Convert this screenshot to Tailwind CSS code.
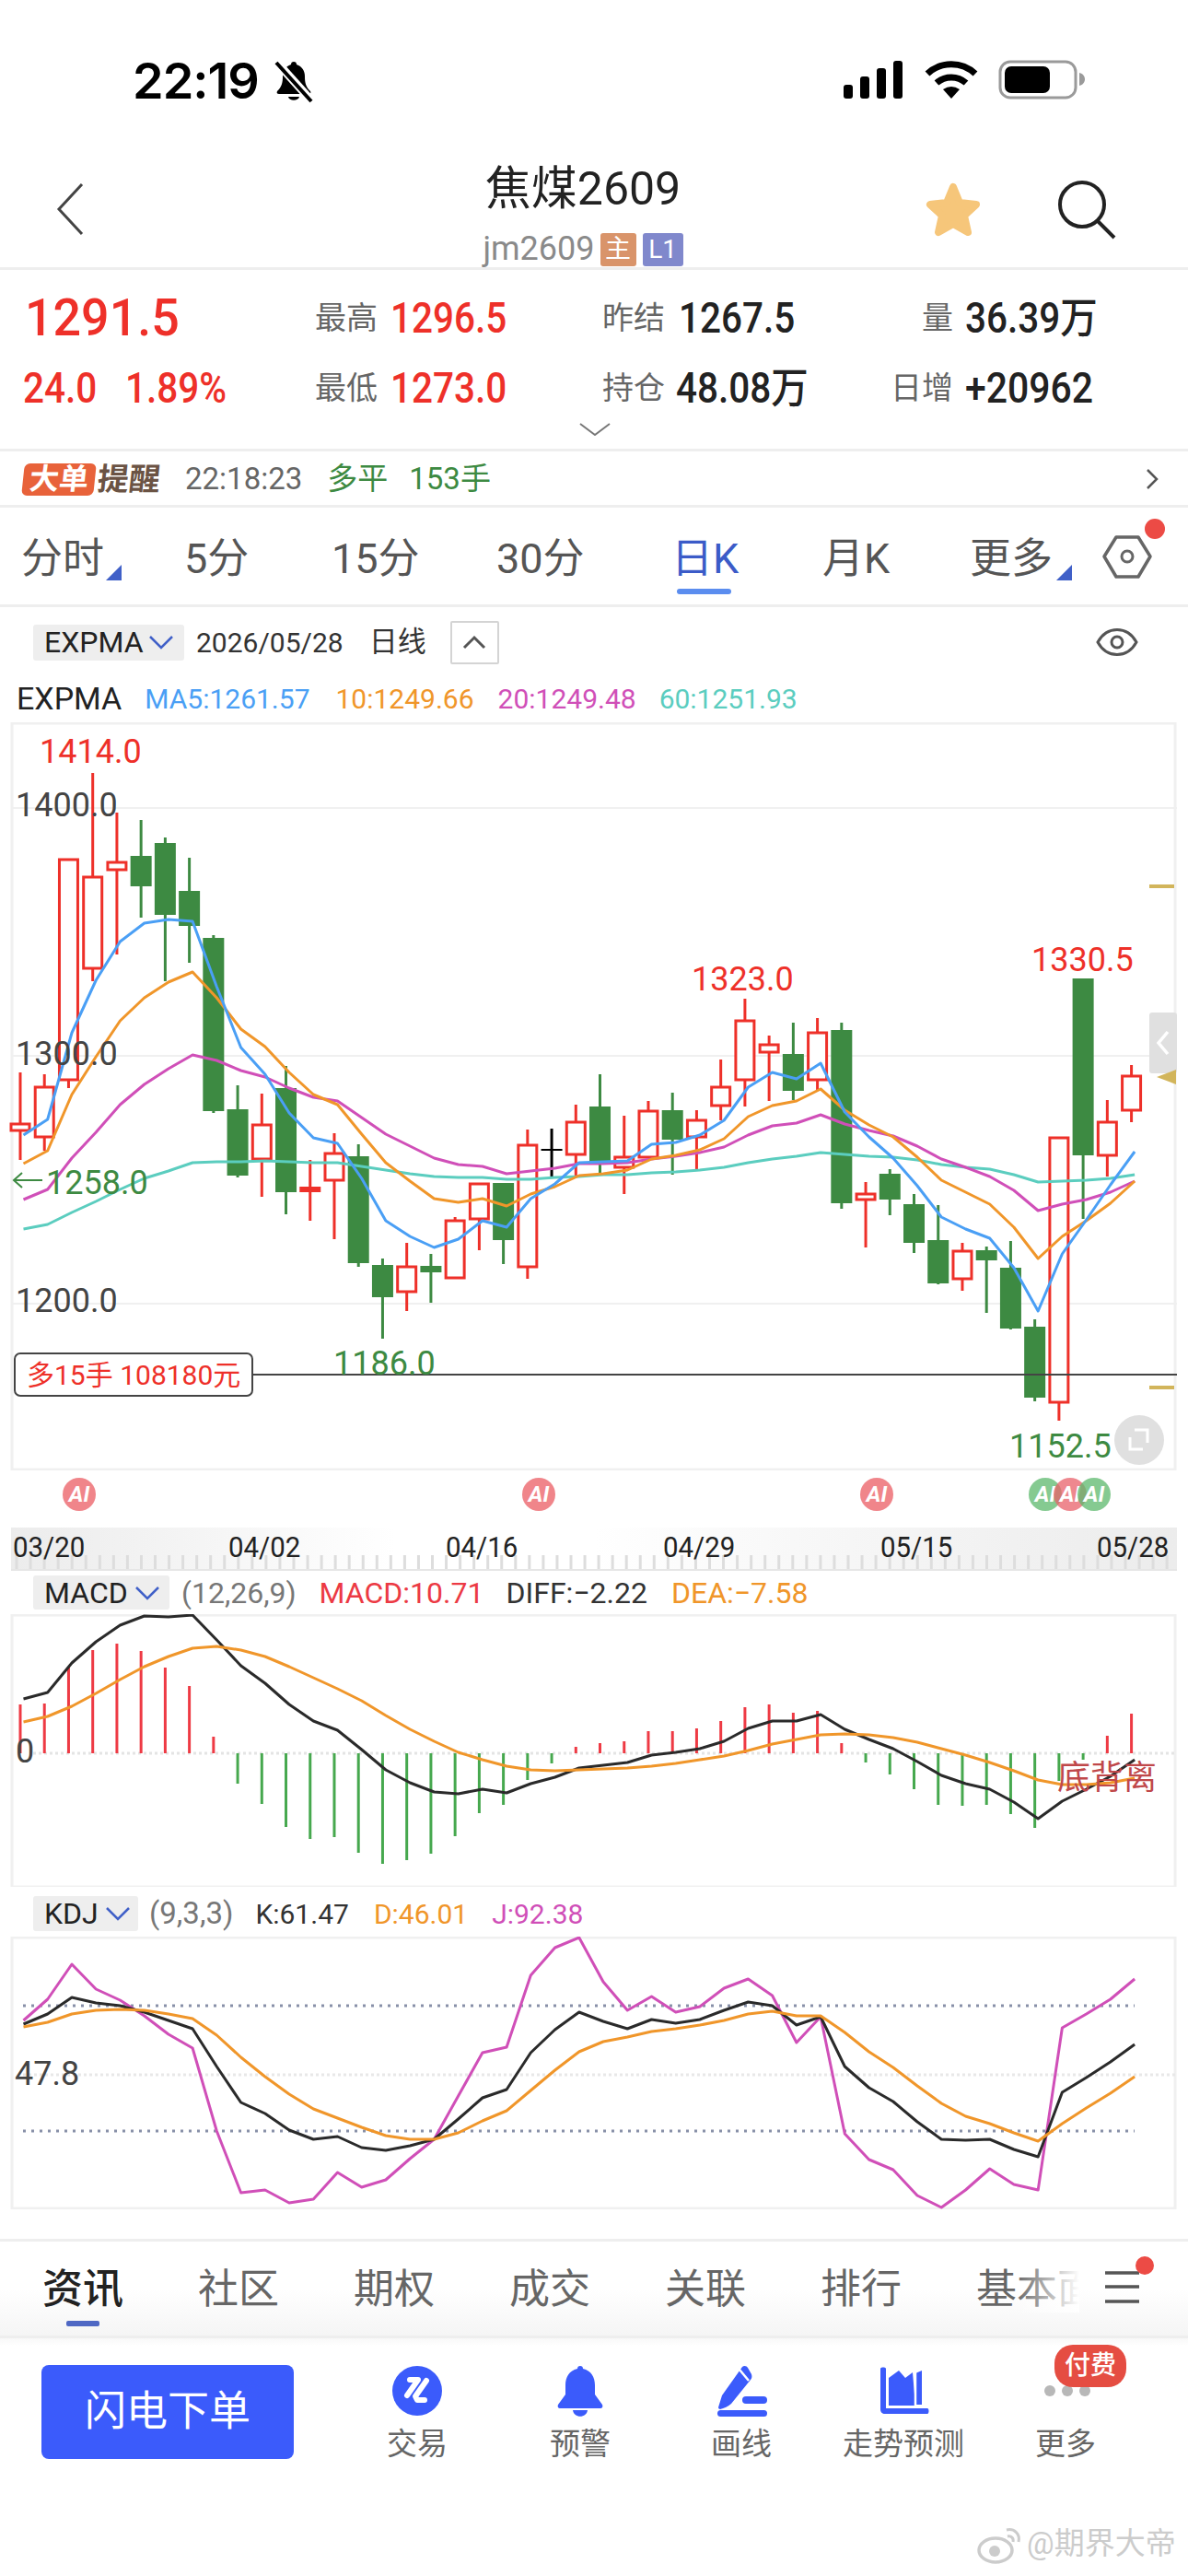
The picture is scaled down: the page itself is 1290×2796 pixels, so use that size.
<!DOCTYPE html>
<html lang="en">
<head>
  <meta charset="UTF-8">
  <title>焦煤2609</title>
  <script src="https://cdn.jsdelivr.net/npm/@tailwindcss/browser@4"></script>
</head>
<body class="bg-white w-[1290px] h-[2796px] overflow-hidden text-[#222] font-['Roboto','Noto_Sans_CJK_SC',sans-serif]">

  <!-- status bar -->
  <div class="h-[170px] relative flex items-start">
    <div class="ml-[144px] mt-[58px] text-[54px] leading-[60px] font-semibold font-['Inter'] text-black tracking-[-1px]">22:19</div>
    <svg class="ml-[16px] mt-[64px]" width="44" height="48" viewBox="0 0 44 48">
      <path d="M22 3c-2 0-3 1-3 3-6 2-9 7-9 13 0 7-1 11-6 16-1 2 0 3 2 3h32c2 0 3-1 2-3-5-5-6-9-6-16 0-6-3-11-9-13 0-2-1-3-3-3z M16 41h12c-1 5-11 5-12 0z" fill="#000"/>
      <path d="M4 4L40 44" stroke="#fff" stroke-width="9"/>
      <path d="M3 4L41 46" stroke="#000" stroke-width="4"/>
    </svg>
    <svg class="absolute left-[910px] top-[60px]" width="280" height="52" viewBox="910 60 280 52">
      <rect x="916" y="92" width="10" height="15" rx="3" fill="#000"/>
      <rect x="934" y="83" width="10" height="24" rx="3" fill="#000"/>
      <rect x="952" y="74" width="10" height="33" rx="3" fill="#000"/>
      <rect x="970" y="66" width="10" height="41" rx="3" fill="#000"/>
      <path d="M1007 80A38 38 0 0 1 1059 80" fill="none" stroke="#000" stroke-width="7"/>
      <path d="M1017 90A24 24 0 0 1 1049 90" fill="none" stroke="#000" stroke-width="7"/>
      <path d="M1024 97Q1033 91 1042 97L1033 107z" fill="#000"/>
      <rect x="1086" y="67" width="82" height="39" rx="11" fill="none" stroke="#9a9a9a" stroke-width="3"/>
      <rect x="1091" y="72" width="49" height="29" rx="7" fill="#000"/>
      <path d="M1172 79c4 1 6 4 6 7s-2 6-6 7z" fill="#9a9a9a"/>
    </svg>
  </div>

  <!-- title -->
  <div class="h-[123px] border-b-[3px] border-[#eeeeee] flex items-start">
    <svg class="ml-[60px] mt-[28px]" width="32" height="58" viewBox="0 0 32 58"><path d="M29 2L4 29l25 27" fill="none" stroke="#444" stroke-width="3"/></svg>
    <div class="ml-[430px] w-[222px] flex flex-col items-center">
      <div class="text-[50px] leading-[60px] mt-[5px]">焦煤2609</div>
      <div class="flex items-center mt-[17px] h-[37px]">
        <span class="text-[36px] text-[#8a8a8a] leading-[37px]">jm2609</span>
        <span class="ml-[6px] w-[39px] h-[36px] rounded-[3px] bg-[#d9946a] text-white text-[28px] leading-[36px] text-center">主</span>
        <span class="ml-[7px] w-[44px] h-[36px] rounded-[3px] bg-[#8088cc] text-white text-[28px] leading-[36px] text-center">L1</span>
      </div>
    </div>
    <svg class="ml-[257px] mt-[24px]" width="68" height="68" viewBox="0 0 68 68">
      <polygon points="34,9 41,26 59,28 46,40 50,58 34,49 18,58 22,40 9,28 27,26" fill="#f6c67a" stroke="#f6c67a" stroke-width="8" stroke-linejoin="round"/>
    </svg>
    <svg class="ml-[80px] mt-[26px]" width="64" height="64" viewBox="0 0 64 64">
      <circle cx="26" cy="26" r="24" fill="none" stroke="#222" stroke-width="4"/>
      <path d="M43 44L61 62" stroke="#222" stroke-width="4"/>
    </svg>
  </div>

  <!-- quote -->
  <div class="h-[197px] border-b-[3px] border-[#eeeeee] relative">
    <div class="flex items-center h-[86px] pt-[18px] text-[46px] font-medium">
      <div class="w-[342px] pl-[27px] text-[56px] leading-[60px] text-[#ee3029]"><span class="inline-block scale-x-[0.96] origin-left">1291.5</span></div>
      <div class="w-[312px] flex items-center"><span class="text-[34px] font-normal text-[#666] w-[82px]">最高</span><span class="inline-block scale-x-[0.88] origin-left text-[#ee3029]">1296.5</span></div>
      <div class="w-[306px] flex items-center"><span class="text-[34px] font-normal text-[#666] w-[83px]">昨结</span><span class="inline-block scale-x-[0.88] origin-left">1267.5</span></div>
      <div class="flex items-center"><span class="w-[75px] text-right text-[34px] font-normal text-[#666]">量</span><span class="ml-[13px] inline-block scale-x-[0.88] origin-left">36.39万</span></div>
    </div>
    <div class="flex items-center h-[76px] mt-[4px] text-[46px] font-medium">
      <div class="w-[342px] pl-[25px] text-[#ee3029] flex gap-[20px]"><span class="inline-block scale-x-[0.88] origin-left">24.0</span><span class="inline-block scale-x-[0.88] origin-left">1.89%</span></div>
      <div class="w-[312px] flex items-center"><span class="text-[34px] font-normal text-[#666] w-[82px]">最低</span><span class="inline-block scale-x-[0.88] origin-left text-[#ee3029]">1273.0</span></div>
      <div class="w-[306px] flex items-center"><span class="text-[34px] font-normal text-[#666] w-[80px]">持仓</span><span class="inline-block scale-x-[0.88] origin-left">48.08万</span></div>
      <div class="flex items-center"><span class="w-[75px] text-right text-[34px] font-normal text-[#666] whitespace-nowrap">日增</span><span class="ml-[13px] inline-block scale-x-[0.89] origin-left">+20962</span></div>
    </div>
    <svg class="absolute left-[629px] top-[166px]" width="34" height="14" viewBox="0 0 34 14"><path d="M1 1l16 12L33 1" fill="none" stroke="#777" stroke-width="2"/></svg>
  </div>

  <!-- big order alert -->
  <div class="h-[61px] border-b-[3px] border-[#eeeeee] flex items-center pt-[2px] text-[33px]">
    <span class="ml-[25px] w-[78px] h-[35px] rounded-[6px] bg-[#e8623a] text-white font-bold text-[32px] leading-[35px] text-center -skew-x-6">大单</span>
    <span class="ml-[3px] text-[34px] font-bold text-[#6b5344] -skew-x-6">提醒</span>
    <span class="ml-[27px] text-[#666]">22:18:23</span>
    <span class="ml-[27px] text-[#3d8a42]">多平</span>
    <span class="ml-[23px] text-[#3d8a42]">153手</span>
    <svg class="ml-auto mr-[32px]" width="14" height="22" viewBox="0 0 14 22"><path d="M2 1l10 10L2 21" fill="none" stroke="#555" stroke-width="2.5"/></svg>
  </div>

  <!-- period tabs -->
  <div class="h-[108px] border-b-[3px] border-[#eeeeee] relative text-[45px] leading-[54px] text-[#555]">
    <span class="absolute left-[23px] top-[29px]">分时</span>
    <span class="absolute left-[200px] top-[29px]">5分</span>
    <span class="absolute left-[360px] top-[29px]">15分</span>
    <span class="absolute left-[539px] top-[29px]">30分</span>
    <span class="absolute left-[729px] top-[29px] text-[#3b5bc8]">日K</span>
    <span class="absolute left-[893px] top-[29px]">月K</span>
    <span class="absolute left-[1053px] top-[29px]">更多</span>
    <span class="absolute left-[735px] top-[88px] w-[59px] h-[6px] rounded-full bg-[#5b8def]"></span>
    <svg class="absolute left-0 top-0" width="1290" height="100" viewBox="0 552 1290 100">
      <polygon points="132,614 132,631 115,631" fill="#4060c8"/>
      <polygon points="1164,614 1164,631 1147,631" fill="#4060c8"/>
      <polygon points="1199,605 1212,584 1236,584 1249,605 1236,627 1212,627" fill="none" stroke="#666" stroke-width="3.5" stroke-linejoin="round"/>
      <circle cx="1224" cy="605" r="6" fill="none" stroke="#666" stroke-width="3"/>
      <circle cx="1254" cy="575" r="11" fill="#ec4b45"/>
    </svg>
  </div>

  <!-- main chart toolbar -->
  <div class="h-[125px] relative">
    <div class="flex items-center h-[72px] pl-[36px] pt-[4px]">
      <div class="h-[39px] w-[164px] bg-[#eeeeee] rounded-[3px] flex items-center pl-[12px] text-[32px]">EXPMA
        <svg class="ml-[6px]" width="26" height="16" viewBox="0 0 26 16"><path d="M1 2l12 12L25 2" fill="none" stroke="#4060c8" stroke-width="2.5"/></svg>
      </div>
      <span class="ml-[13px] text-[30px] text-[#333]">2026/05/28</span>
      <span class="ml-[28px] text-[31px] text-[#333]">日线</span>
      <div class="ml-[26px] w-[53px] h-[47px] border-2 border-[#d4d4d4] rounded-[2px] flex items-center justify-center">
        <svg width="26" height="16" viewBox="0 0 26 16"><path d="M2 14L13 3l11 11" fill="none" stroke="#555" stroke-width="3"/></svg>
      </div>
      <svg class="ml-auto mr-[54px]" width="46" height="32" viewBox="0 0 46 32"><path d="M2 16C12 -2 34 -2 44 16C34 34 12 34 2 16z" fill="none" stroke="#555" stroke-width="3"/><circle cx="23" cy="16" r="6" fill="none" stroke="#555" stroke-width="3"/></svg>
    </div>
    <div class="flex items-center h-[53px] pl-[18px] pt-[2px] text-[30px]">
      <span class="text-[#222] text-[34px]">EXPMA</span>
      <span class="ml-[25px] text-[#4a9ff5]">MA5:1261.57</span>
      <span class="ml-[28px] text-[#f0962a]">10:1249.66</span>
      <span class="ml-[26px] text-[#d04fb8]">20:1249.48</span>
      <span class="ml-[25px] text-[#5bcdbf]">60:1251.93</span>
    </div>
  </div>

  <!-- main chart -->
  <svg id="mainChart" class="block" width="1290" height="812" viewBox="0 785 1290 812" font-family="Roboto,'Noto Sans CJK SC',sans-serif"></svg>

  <!-- AI markers -->
  <div class="h-[62px] relative text-white italic font-bold text-[24px] leading-[36px] text-center">
    <span class="absolute left-[68px] top-[8px] w-[36px] h-[36px] rounded-full bg-[#f0858a]">AI</span>
    <span class="absolute left-[567px] top-[8px] w-[36px] h-[36px] rounded-full bg-[#f0858a]">AI</span>
    <span class="absolute left-[934px] top-[8px] w-[36px] h-[36px] rounded-full bg-[#f0858a]">AI</span>
    <span class="absolute left-[1117px] top-[8px] w-[36px] h-[36px] rounded-full bg-[#5cb86c]/75">AI</span>
    <span class="absolute left-[1144px] top-[8px] w-[36px] h-[36px] rounded-full bg-[#e8606a]/75">AI</span>
    <span class="absolute left-[1170px] top-[8px] w-[36px] h-[36px] rounded-full bg-[#5cb86c]/75">AI</span>
  </div>

  <!-- date axis -->
  <div class="h-[47px] ml-[12px] w-[1266px] relative bg-[linear-gradient(90deg,#ececec_0%,#f7f7f7_20%,#ffffff_33%,#ffffff_50%,#f6f6f6_72%,#ececec_100%)] overflow-hidden text-[32px] leading-[36px] text-[#222]">
    <svg id="axisTicks" class="absolute left-0 top-0" width="1266" height="47" viewBox="12 1659 1266 47"></svg>
    <span class="absolute left-[2px] top-[3px] scale-x-[0.92] origin-left">03/20</span>
    <span class="absolute left-[236px] top-[3px] scale-x-[0.92] origin-left">04/02</span>
    <span class="absolute left-[472px] top-[3px] scale-x-[0.92] origin-left">04/16</span>
    <span class="absolute left-[708px] top-[3px] scale-x-[0.92] origin-left">04/29</span>
    <span class="absolute left-[944px] top-[3px] scale-x-[0.92] origin-left">05/15</span>
    <span class="absolute left-[1179px] top-[3px] scale-x-[0.92] origin-left">05/28</span>
  </div>

  <!-- MACD -->
  <div class="h-[47px] flex items-center pl-[36px] text-[32px]">
    <div class="h-[37px] w-[148px] bg-[#eeeeee] rounded-[3px] flex items-center pl-[12px] text-[32px]">MACD
      <svg class="ml-[8px]" width="26" height="16" viewBox="0 0 26 16"><path d="M1 2l12 12L25 2" fill="none" stroke="#4060c8" stroke-width="2.5"/></svg>
    </div>
    <span class="ml-[13px] text-[#777]">(12,26,9)</span>
    <span class="ml-[25px] text-[#ec3a44]">MACD:10.71</span>
    <span class="ml-[24px] text-[#333]">DIFF:−2.22</span>
    <span class="ml-[26px] text-[#f0962a]">DEA:−7.58</span>
  </div>
  <svg id="macdChart" class="block" width="1290" height="296" viewBox="0 1752 1290 296" font-family="Roboto,'Noto Sans CJK SC',sans-serif"></svg>

  <!-- KDJ -->
  <div class="h-[54px] flex items-center pl-[36px] pt-[4px] text-[30px]">
    <div class="h-[38px] w-[114px] bg-[#eeeeee] rounded-[3px] flex items-center pl-[12px] text-[32px]">KDJ
      <svg class="ml-[8px]" width="26" height="16" viewBox="0 0 26 16"><path d="M1 2l12 12L25 2" fill="none" stroke="#4060c8" stroke-width="2.5"/></svg>
    </div>
    <span class="ml-[12px] text-[33px] text-[#777]">(9,3,3)</span>
    <span class="ml-[24px] text-[#333]">K:61.47</span>
    <span class="ml-[27px] text-[#f0962a]">D:46.01</span>
    <span class="ml-[26px] text-[#d04fb8]">J:92.38</span>
  </div>
  <svg id="kdjChart" class="block" width="1290" height="296" viewBox="0 2102 1290 296" font-family="Roboto,'Noto Sans CJK SC',sans-serif"></svg>

  <div class="h-[32px]"></div>

  <!-- info tabs -->
  <div class="h-[108px] border-y-[3px] border-[#eeeeee] relative flex items-start bg-linear-to-b from-white via-white to-[#f5f5f5]">
    <div class="ml-[46px] mt-[27px] w-[1126px] flex gap-[81px] overflow-hidden whitespace-nowrap text-[44px] leading-[50px] text-[#666] relative">
      <span class="text-[#222] font-medium">资讯</span>
      <span>社区</span><span>期权</span><span>成交</span><span>关联</span><span>排行</span><span>基本面</span>
      <div class="absolute right-0 top-0 w-[70px] h-full bg-linear-to-r from-transparent to-white"></div>
    </div>
    <span class="absolute left-[72px] top-[86px] w-[36px] h-[6px] rounded-[2px] bg-[#4f68c4]"></span>
    <svg class="absolute left-[1195px] top-[15px]" width="60" height="60" viewBox="1195 2448 60 60">
      <path d="M1200 2467h37M1200 2482h37M1200 2498h37" stroke="#555" stroke-width="3.5"/>
      <circle cx="1243" cy="2459" r="10" fill="#ec4b45"/>
    </svg>
  </div>

  <!-- bottom actions -->
  <div class="relative h-[258px] bg-linear-to-b from-[#f8f8f8] to-white to-[8px]">
    <div class="absolute left-[45px] top-[29px] w-[274px] h-[102px] rounded-[8px] bg-[#3b5bfb] text-white text-[45px] flex items-center justify-center">闪电下单</div>
    <div class="pl-[319px] flex pt-[29px]">
      <div class="w-[268px] flex flex-col items-center text-[33px] leading-[40px] text-[#666]">
        <svg width="56" height="56" viewBox="0 0 56 56"><circle cx="28" cy="28" r="27" fill="#3b5bfb"/><path d="M20 16h9l-12 17M38 17l-12 17 2 4h8" fill="none" stroke="#fff" stroke-width="6" stroke-linecap="round" stroke-linejoin="round"/></svg>
        <span class="mt-[10px] whitespace-nowrap">交易</span>
      </div>
    </div>
    <div class="absolute left-[596px] top-[29px] w-[68px] flex flex-col items-center text-[33px] leading-[40px] text-[#666]">
      <svg width="52" height="56" viewBox="0 0 52 56"><path d="M26 1c-2 0-3 1-3 3-9 2-13 9-13 18v10L2 43c-1 2 0 4 2 4h44c2 0 3-2 2-4l-8-11V22c0-9-4-16-13-18 0-2-1-3-3-3z" fill="#3b5bfb"/><path d="M18 49h16c-1 9-15 9-16 0z" fill="#3b5bfb"/></svg>
      <span class="mt-[10px] whitespace-nowrap">预警</span>
    </div>
    <div class="absolute left-[771px] top-[29px] w-[68px] flex flex-col items-center text-[33px] leading-[40px] text-[#666]">
      <svg width="56" height="56" viewBox="0 0 56 56"><path d="M29 2c2-2 5-1 6 1l4 7c1 3 0 5-1 6L17 42c-3 3-8 5-12 6-1 0-2-1-2-2l4-13z" fill="#3b5bfb"/><path d="M26 5l10 12" stroke="#fff" stroke-width="2.5"/><rect x="29" y="34" width="27" height="8" rx="4" fill="#3b5bfb"/><rect x="2" y="49" width="54" height="7" rx="3.5" fill="#3b5bfb"/></svg>
      <span class="mt-[10px] whitespace-nowrap">画线</span>
    </div>
    <div class="absolute left-[917px] top-[29px] w-[128px] flex flex-col items-center text-[33px] leading-[40px] text-[#666]">
      <svg width="56" height="56" viewBox="0 0 56 56"><path d="M3 4v44c0 3 2 5 5 5h46c2 0 2-6 0-6H9V4C9 2 3 2 3 4z" fill="#3b5bfb"/><path d="M12 14L23 6l7 8 8-6 3 36H12z" fill="#3b5bfb"/><path d="M41 9l7-3v37h-7" fill="#3b5bfb"/><path d="M41 8v36" stroke="#fff" stroke-width="2.5"/></svg>
      <span class="mt-[10px] whitespace-nowrap">走势预测</span>
    </div>
    <div class="absolute left-[1123px] top-[29px] w-[68px] flex flex-col items-center text-[33px] leading-[40px] text-[#666]">
      <svg width="64" height="56" viewBox="0 0 64 56"><circle cx="15" cy="28" r="6" fill="#b8b8b8"/><circle cx="34" cy="28" r="6" fill="#b8b8b8"/><circle cx="53" cy="28" r="6" fill="#b8b8b8"/></svg>
      <span class="mt-[10px] whitespace-nowrap">更多</span>
    </div>
    <div class="absolute left-[1145px] top-[7px] w-[78px] h-[46px] rounded-[20px] bg-[#e54d42] text-white text-[28px] font-medium leading-[46px] text-center">付费</div>
    <div class="absolute left-[1061px] top-[200px] flex items-center whitespace-nowrap text-[#cccccc] text-[33px] leading-[40px]">
      <svg width="52" height="46" viewBox="0 0 52 46"><ellipse cx="20" cy="30" rx="18" ry="13" fill="none" stroke="#cccccc" stroke-width="3.5"/><circle cx="19" cy="31" r="6" fill="#cccccc"/><path d="M32 8c8-2 15 4 13 13M33 15c4-1 7 2 6 6" fill="none" stroke="#cccccc" stroke-width="3"/></svg>
      <span class="ml-[2px]">@期界大帝</span>
    </div>
  </div>

  <script>
    var RED = "#ee3029", GREEN = "#3d8a42", BLUE = "#4a9ff5", ORANGE = "#f0962a", PINK = "#d04fb8", TEAL = "#5bcdbf", DARK = "#2a2a2a";
    function cx(i) { return 22 + 26.23 * i; }
    function lx(i) { return cx(i) + 3.5; }

    function line(ys, color) {
      var pts = ys.map(function (y, i) { return lx(i).toFixed(1) + "," + y; }).join(" ");
      return '<polyline points="' + pts + '" fill="none" stroke="' + color + '" stroke-width="3" stroke-linejoin="round"/>';
    }
    function label(x, y, txt, color, size) {
      return '<text x="' + x + '" y="' + y + '" fill="' + color + '" font-size="' + size + '">' + txt + '</text>';
    }
    function hline(y, x1, x2, color, w, dash) {
      return '<line x1="' + x1 + '" x2="' + x2 + '" y1="' + y + '" y2="' + y + '" stroke="' + color + '" stroke-width="' + w + '"' + (dash ? ' stroke-dasharray="' + dash + '"' : '') + '/>';
    }
    function frame(y1, y2) {
      return '<rect x="13" y="' + y1 + '" width="1263" height="' + (y2 - y1) + '" fill="#fff" stroke="#f0f0f0" stroke-width="3"/>';
    }

    // type, wick top, body top, body bottom, wick bottom
    var candles = [
      ["r",1165,1221,1228,1260],["r",1167,1181,1235,1250],["r",934,934,1173,1182],["r",840,953,1052,1066],
      ["r",883,937,945,1037],["g",891,930,963,997],["g",910,916,994,1066],["g",932,968,1006,1046],
      ["g",1016,1019,1207,1209],["g",1179,1205,1277,1279],["r",1188,1222,1259,1300],["g",1158,1182,1295,1319],
      ["f",1260,1289,1295,1326],["r",1231,1253,1282,1346],["g",1243,1256,1372,1376],["g",1367,1374,1409,1454],
      ["r",1350,1376,1403,1424],["g",1362,1375,1382,1415],["r",1322,1326,1388,1388],["r",1286,1286,1324,1358],
      ["g",1285,1285,1347,1373],["r",1227,1244,1376,1389],["k",1226,1248,1250,1278],["r",1200,1219,1254,1277],
      ["g",1167,1202,1263,1277],["r",1212,1257,1268,1297],["r",1196,1207,1257,1257],["g",1187,1206,1238,1276],
      ["r",1206,1217,1235,1270],["r",1151,1181,1201,1217],["r",1085,1109,1173,1202],["r",1125,1135,1143,1196],
      ["g",1111,1145,1185,1195],["r",1106,1122,1173,1185],["g",1111,1119,1307,1313],["r",1284,1297,1303,1355],
      ["g",1270,1275,1303,1320],["g",1297,1308,1350,1361],["g",1309,1347,1394,1395],["r",1350,1359,1389,1402],
      ["g",1354,1358,1369,1426],["g",1348,1377,1443,1444],["g",1433,1441,1518,1522],["r",1236,1236,1523,1543],
      ["g",1063,1063,1255,1324],["r",1195,1219,1255,1278],["r",1157,1169,1206,1219]
    ];
    var ma5 = [1233,1216,1122,1065,1023,1003,999,1001,1072,1138,1167,1209,1236,1242,1280,1326,1343,1355,1346,1326,1333,1302,1286,1263,1262,1261,1243,1241,1233,1217,1181,1165,1172,1155,1208,1235,1258,1288,1322,1335,1345,1377,1424,1362,1325,1287,1251];
    var ma10 = [1264,1250,1189,1148,1109,1084,1067,1056,1084,1118,1137,1165,1189,1200,1232,1263,1283,1302,1306,1302,1310,1297,1289,1277,1275,1271,1259,1255,1249,1237,1213,1201,1196,1183,1206,1222,1235,1257,1282,1295,1308,1333,1367,1343,1326,1307,1283];
    var ma20 = [1303,1292,1258,1230,1200,1178,1161,1146,1152,1163,1170,1182,1192,1196,1214,1232,1245,1258,1265,1267,1275,1272,1269,1264,1264,1263,1259,1256,1252,1246,1233,1223,1220,1211,1221,1228,1234,1245,1259,1268,1278,1293,1315,1308,1303,1295,1283];
    var ma60 = [1335,1330,1317,1305,1292,1280,1272,1263,1262,1262,1261,1262,1263,1263,1267,1271,1275,1278,1279,1279,1281,1281,1279,1278,1276,1276,1274,1273,1271,1268,1263,1259,1256,1252,1254,1256,1257,1260,1265,1268,1270,1276,1284,1283,1282,1280,1276];

    var hist = [1850,1849,1810,1791,1784,1792,1810,1830,1885,1936,1958,1983,1996,1994,2011,2023,2019,2012,1993,1968,1959,1932,1914,1896,1892,1890,1879,1879,1876,1868,1853,1850,1859,1857,1892,1913,1926,1942,1959,1960,1959,1969,1984,1933,1910,1884,1860];
    var diff = [1844,1837,1805,1782,1764,1754,1755,1753,1780,1808,1827,1850,1868,1878,1899,1921,1935,1945,1947,1942,1946,1936,1929,1919,1916,1913,1905,1902,1898,1890,1876,1868,1868,1861,1877,1888,1898,1912,1927,1936,1942,1956,1974,1955,1942,1928,1910];
    var dea = [1869,1863,1852,1838,1823,1809,1798,1789,1787,1791,1798,1809,1821,1833,1846,1862,1877,1890,1902,1910,1917,1921,1922,1921,1920,1919,1917,1914,1910,1906,1900,1893,1888,1883,1882,1883,1886,1891,1898,1905,1913,1922,1932,1937,1937,1935,1930];

    var kLine = [2197,2186,2168,2174,2177,2184,2193,2202,2243,2282,2294,2312,2322,2319,2331,2334,2329,2322,2300,2277,2268,2228,2203,2184,2194,2202,2192,2196,2192,2182,2173,2177,2198,2189,2243,2266,2281,2303,2322,2323,2322,2333,2341,2271,2255,2238,2219];
    var dLine = [2200,2195,2186,2182,2181,2182,2186,2191,2209,2233,2254,2273,2289,2299,2309,2318,2322,2322,2315,2302,2291,2269,2247,2227,2216,2211,2205,2202,2198,2193,2186,2183,2188,2188,2206,2227,2244,2264,2283,2297,2305,2315,2324,2305,2288,2272,2254];
    var jLine = [2193,2170,2132,2159,2171,2188,2208,2223,2313,2380,2377,2391,2387,2358,2374,2366,2343,2322,2275,2228,2222,2144,2114,2103,2151,2182,2167,2184,2178,2158,2148,2166,2217,2189,2316,2344,2355,2383,2396,2377,2354,2371,2377,2201,2186,2170,2148];

    // main candlestick chart
    var main = frame(786, 1596);
    [878, 1147, 1416].forEach(function (y) { main += hline(y, 13, 1278, "#f0f0f0", 2); });
    candles.forEach(function (c, i) {
      var x = cx(i);
      var col = c[0] === "r" || c[0] === "f" ? RED : c[0] === "k" ? "#000" : GREEN;
      main += '<line x1="' + x + '" x2="' + x + '" y1="' + c[1] + '" y2="' + c[4] + '" stroke="' + col + '" stroke-width="3"/>';
      if (c[0] === "r") main += '<rect x="' + (x - 10) + '" y="' + c[2] + '" width="20" height="' + (c[3] - c[2]) + '" fill="#fff" stroke="' + col + '" stroke-width="3"/>';
      else main += '<rect x="' + (x - 11.5) + '" y="' + c[2] + '" width="23" height="' + (c[3] - c[2]) + '" fill="' + col + '"/>';
    });
    main += hline(1493, 274, 1278, "#444", 2);
    main += line(ma60, TEAL) + line(ma20, PINK) + line(ma10, ORANGE) + line(ma5, BLUE);
    main += label(43, 829, "1414.0", RED, 36) + label(17, 887, "1400.0", "#444", 36) + label(17, 1157, "1300.0", "#444", 36);
    main += label(50, 1297, "1258.0", GREEN, 36) + label(17, 1425, "1200.0", "#444", 36);
    main += '<path d="M46 1282H15M24 1274l-9 8 9 8" fill="none" stroke="' + GREEN + '" stroke-width="2"/>';
    main += label(362, 1493, "1186.0", GREEN, 36) + label(751, 1076, "1323.0", RED, 36) + label(1120, 1055, "1330.5", RED, 36) + label(1096, 1583, "1152.5", GREEN, 36);
    main += '<rect x="16" y="1470" width="258" height="46" rx="6" fill="#fff" stroke="#444" stroke-width="2"/>';
    main += label(29, 1504, "多15手 108180元", RED, 30);
    main += '<rect x="1248" y="961" width="27" height="4" fill="#d2b55b"/><rect x="1248" y="1505" width="27" height="4" fill="#d2b55b"/>';
    main += '<rect x="1248" y="1100" width="30" height="66" rx="3" fill="#e0e0e0"/><path d="M1268 1121l-10 12 10 12" fill="none" stroke="#fff" stroke-width="3.5"/>';
    main += '<polygon points="1256,1170 1277,1162 1277,1178" fill="#d2b55b"/>';
    main += '<circle cx="1237" cy="1564" r="27" fill="#e0e0e0"/><path d="M1232 1553h14v14M1227 1561v13h14" fill="none" stroke="#fff" stroke-width="3"/>';
    document.getElementById("mainChart").innerHTML = main;

    // axis ticks
    var ticks = "";
    for (var t = 18; t < 1278; t += 15.05) ticks += '<line x1="' + t + '" x2="' + t + '" y1="1689" y2="1706" stroke="#dddddd" stroke-width="3"/>';
    ticks += hline(1705, 12, 1278, "#e6e6e6", 2);
    document.getElementById("axisTicks").innerHTML = ticks;

    // MACD
    var macd = frame(1753, 2048) + hline(1903, 36, 1276, "#e4e4e4", 3, "3 3");
    hist.forEach(function (y, i) {
      var col = y < 1903 ? "#ee3a44" : "#46a84e";
      macd += '<line x1="' + cx(i) + '" x2="' + cx(i) + '" y1="1903" y2="' + y + '" stroke="' + col + '" stroke-width="3"/>';
    });
    macd += line(diff, DARK) + line(dea, ORANGE);
    macd += label(17, 1913, "0", "#444", 36);
    macd += label(1148, 1942, "底背离", "#c0484a", 36);
    document.getElementById("macdChart").innerHTML = macd;

    // KDJ
    var kdj = frame(2103, 2397);
    kdj += hline(2177, 25, 1232, "#8890a8", 3, "3 6") + hline(2252, 25, 1276, "#e8e8e8", 3, "3 3") + hline(2313, 25, 1232, "#8890a8", 3, "3 6");
    kdj += line(jLine, PINK) + line(kLine, DARK) + line(dLine, ORANGE);
    kdj += label(16, 2263, "47.8", "#444", 36);
    document.getElementById("kdjChart").innerHTML = kdj;
  </script>
</body>
</html>
